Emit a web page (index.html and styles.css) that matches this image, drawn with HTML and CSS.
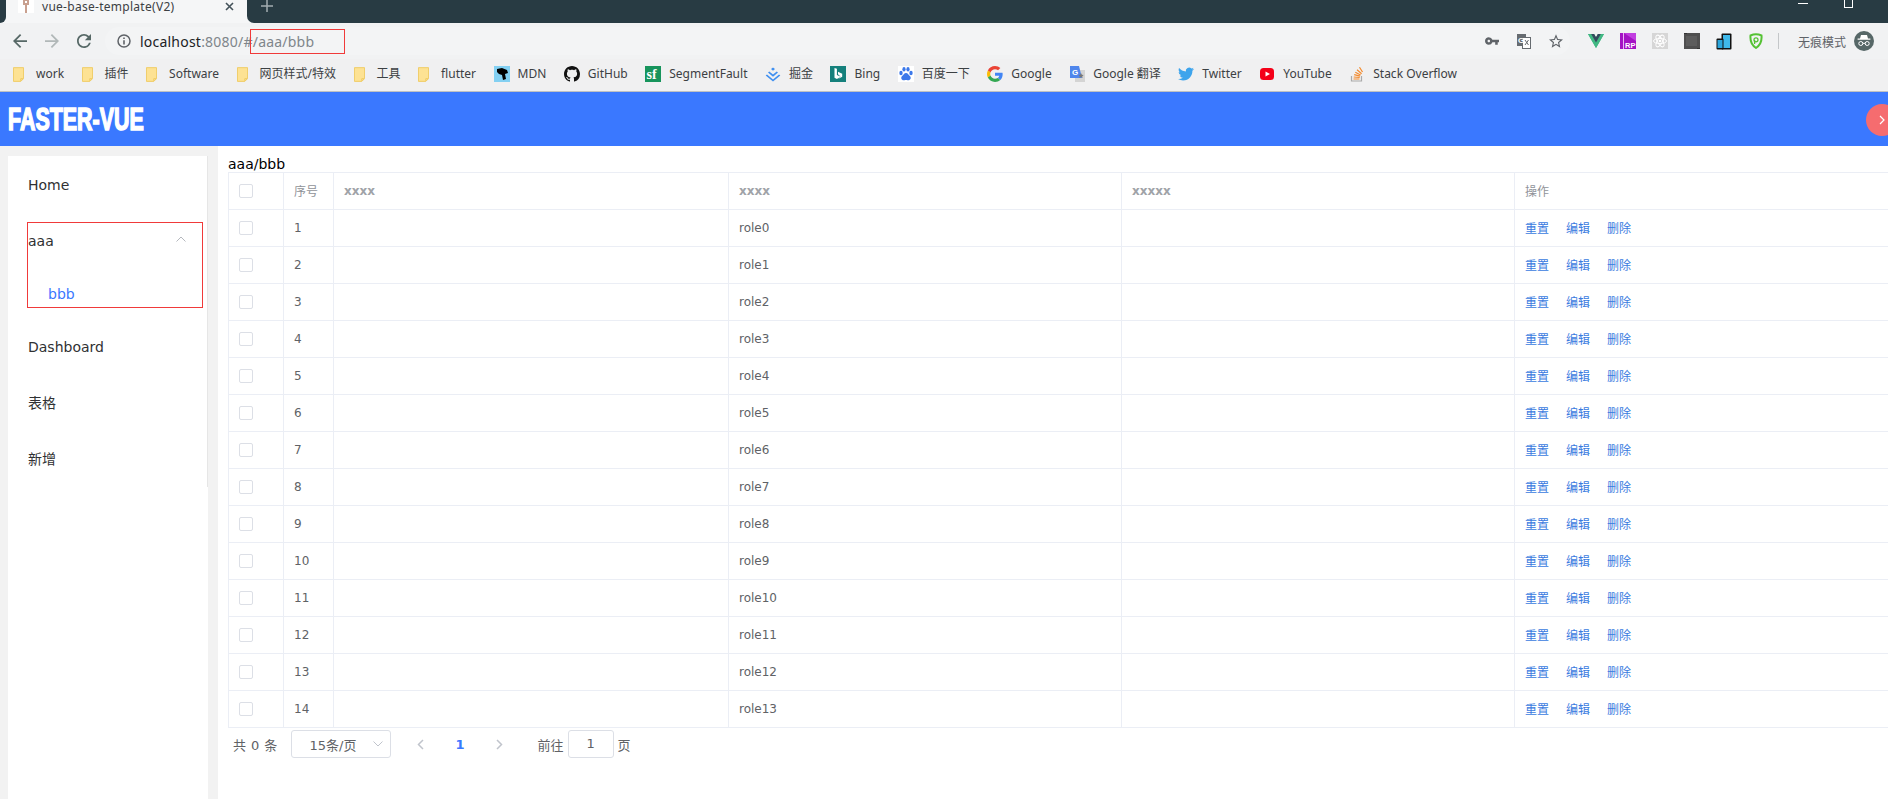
FILE: index.html
```html
<!DOCTYPE html>
<html>
<head>
    <title>vue-base-template(V2)</title>
    <link rel="stylesheet" href="styles.css">
</head>
<body>
    <svg class="defs" width="0" height="0">
        <symbol id="folder" viewBox="0 0 12 16">
            <path d="M.5.5h11v12l-3 3H.5z" fill="#fde293" stroke="#efc95f"/>
            <path d="M8.5 15v-2.5H11" fill="none" stroke="#efc95f"/>
        </symbol>
    </svg>

    <div class="tabstrip">
        <div class="strip-left"></div>
        <div class="tab">
            <div class="favicon">
                <svg width="8" height="13" viewBox="0 0 8 13"><path d="M1 0h6v5H5v8H3V5H1z" fill="#c9a08f"/><path d="M3 1h2v2H3z" fill="#fff"/></svg>
            </div>
            <span class="tab-title">vue-base-template(V2)</span>
            <svg class="tab-close" width="9" height="9" viewBox="0 0 9 9"><path d="M1 1l7 7M8 1L1 8" stroke="#44525a" stroke-width="1.6"/></svg>
        </div>
        <div class="strip-right">
            <svg class="new-tab" width="12" height="12" viewBox="0 0 12 12"><path d="M6 0v12M0 6h12" stroke="#a3adb1" stroke-width="1.5"/></svg>
            <div class="win-min"></div>
            <div class="win-restore"></div>
        </div>
    </div>

    <div class="toolbar">
        <svg class="nav-icon" viewBox="4 4 16 16"><path d="M20 11H7.83l5.59-5.59L12 4l-8 8 8 8 1.41-1.41L7.83 13H20v-2z" fill="#566866"/></svg>
        <svg class="nav-icon" viewBox="4 4 16 16"><path d="M4 11h12.17l-5.59-5.59L12 4l8 8-8 8-1.41-1.41L16.17 13H4v-2z" fill="#b1b8b8"/></svg>
        <svg class="nav-icon" viewBox="4 4 16 16"><path d="M17.65 6.35A7.958 7.958 0 0 0 12 4c-4.42 0-7.99 3.58-7.99 8s3.57 8 7.99 8c3.73 0 6.84-2.55 7.73-6h-2.08A5.99 5.99 0 0 1 12 18c-3.31 0-6-2.69-6-6s2.69-6 6-6c1.66 0 3.14.69 4.22 1.78L13 11h7V4l-2.35 2.35z" fill="#566866"/></svg>
        <div class="omnibox">
            <svg class="info-icon" width="14" height="14" viewBox="0 0 14 14"><circle cx="7" cy="7" r="6" fill="none" stroke="#5f6368" stroke-width="1.5"/><path d="M6.2 3.4h1.6V5H6.2zM6.2 6.2h1.6v4.4H6.2z" fill="#5f6368"/></svg>
            <span class="url"><span class="url-host">localhost</span>:8080/#/aaa/bbb</span>
            <div class="url-mark"></div>
            <div class="omni-actions">
                <svg width="14" height="8" viewBox="1 6 22 12"><path d="M12.65 10A5.99 5.99 0 0 0 7 6c-3.31 0-6 2.69-6 6s2.69 6 6 6a5.99 5.99 0 0 0 5.65-4H17v4h4v-4h2v-4H12.65zM7 14c-1.1 0-2-.9-2-2s.9-2 2-2 2 .9 2 2-.9 2-2 2z" fill="#5f6368"/></svg>
                <svg width="14" height="15" viewBox="0 0 14 15"><rect x="0" y="0" width="9" height="12" fill="#666b70"/><rect x="5.5" y="3.5" width="8" height="11" fill="#fff" stroke="#666b70"/><text x="1" y="8.5" class="svg-tiny">G</text><path d="M8 6l3.5 5M11.5 6L8 11" stroke="#666b70"/></svg>
                <svg width="14" height="14" viewBox="2 2 20 19"><path d="M22 9.24l-7.19-.62L12 2 9.19 8.63 2 9.24l5.46 4.73L5.82 21 12 17.27 18.18 21l-1.63-7.03L22 9.24zM12 15.4l-3.76 2.27 1-4.28-3.32-2.88 4.38-.38L12 6.1l1.71 4.04 4.38.38-3.32 2.88 1 4.28L12 15.4z" fill="#5f6368"/></svg>
            </div>
        </div>
        <div class="extensions">
            <svg width="16" height="14" viewBox="0 0 256 221"><path d="M204.8 0H256L128 220.8 0 0h97.92L128 51.2 158.72 0h46.08z" fill="#41b883"/><path d="M0 0l128 220.8L256 0h-51.2L128 132.48 50.56 0H0z" fill="#41b883"/><path d="M50.56 0L128 133.12 204.8 0h-47.36L128 51.2 97.92 0H50.56z" fill="#35495e"/></svg>
            <svg width="16" height="16" viewBox="0 0 16 16"><rect width="16" height="16" fill="#a413c4"/><rect x="3" width="1" height="16" fill="#e9b5f2"/><path d="M4 0h12v8z" fill="#c23fe0"/><text x="5" y="14.5" class="svg-rp">RP</text></svg>
            <svg width="16" height="16" viewBox="0 0 16 16"><rect width="16" height="16" fill="#d6d6d6"/><g fill="none" stroke="#fff"><ellipse cx="8" cy="8" rx="6.5" ry="2.6"/><ellipse cx="8" cy="8" rx="6.5" ry="2.6" transform="rotate(60 8 8)"/><ellipse cx="8" cy="8" rx="6.5" ry="2.6" transform="rotate(120 8 8)"/></g><circle cx="8" cy="8" r="1.3" fill="#fff"/></svg>
            <svg width="16" height="16" viewBox="0 0 16 16"><rect width="16" height="16" fill="#4f4f4f"/><rect x="2" y="3" width="11" height="10" fill="#5c5c5c"/><path d="M0 0h3v1H0zM13 15h3v1h-3z" fill="#333"/></svg>
            <svg width="16" height="17" viewBox="0 0 16 17"><rect x="5.5" y=".5" width="10" height="16" rx="1" fill="#111"/><rect x="7" y="2" width="7" height="13" fill="#3fb9ea"/><rect x=".5" y="5.5" width="7" height="11" rx="1" fill="#111"/><rect x="1.5" y="7" width="5" height="8" fill="#2ba6dc"/></svg>
            <svg width="16" height="16" viewBox="0 0 16 16"><path d="M2.5 2.5C6 1 10 1 13.5 2.5 14 8 12 12.5 8 15 4 12.5 2 8 2.5 2.5z" fill="none" stroke="#55c234" stroke-width="2"/><circle cx="8" cy="6.8" r="2" fill="none" stroke="#55c234" stroke-width="1.3"/><path d="M6.6 7v4" stroke="#55c234" stroke-width="1.3"/></svg>
        </div>
        <div class="tool-divider"></div>
        <span class="incognito-label">无痕模式</span>
        <svg class="incognito" width="20" height="20" viewBox="0 0 20 20"><circle cx="10" cy="10" r="10" fill="#566767"/><path d="M7 4h6l1 3.6h2.4v1.1H3.6V7.6H6z" fill="#fff"/><g fill="none" stroke="#fff"><circle cx="6.8" cy="12.5" r="2"/><circle cx="13.2" cy="12.5" r="2"/><path d="M8.8 12.3h2.4"/></g></svg>
    </div>

    <div class="bookmarks">
        <div class="bm bm-dir"><svg class="bm-folder"><use href="#folder"/></svg><span>work</span></div>
        <div class="bm bm-dir"><svg class="bm-folder"><use href="#folder"/></svg><span>插件</span></div>
        <div class="bm bm-dir"><svg class="bm-folder"><use href="#folder"/></svg><span>Software</span></div>
        <div class="bm bm-dir"><svg class="bm-folder"><use href="#folder"/></svg><span>网页样式/特效</span></div>
        <div class="bm bm-dir"><svg class="bm-folder"><use href="#folder"/></svg><span>工具</span></div>
        <div class="bm bm-dir"><svg class="bm-folder"><use href="#folder"/></svg><span>flutter</span></div>
        <div class="bm">
            <svg class="bm-icon" viewBox="0 0 16 16"><rect width="16" height="16" fill="#83d0f2"/><path d="M3 3l5-1 5 2 1 3-3 1 1 5-3 1-1-5-3-1-2-2z" fill="#000"/></svg>
            <span>MDN</span>
        </div>
        <div class="bm">
            <svg class="bm-icon" viewBox="0 0 16 16"><path d="M8 0C3.58 0 0 3.58 0 8c0 3.54 2.29 6.53 5.47 7.59.4.07.55-.17.55-.38 0-.19-.01-.82-.01-1.49-2.01.37-2.53-.49-2.69-.94-.09-.23-.48-.94-.82-1.13-.28-.15-.68-.52-.01-.53.63-.01 1.08.58 1.23.82.72 1.21 1.87.87 2.33.66.07-.52.28-.87.51-1.07-1.78-.2-3.64-.89-3.64-3.95 0-.87.31-1.59.82-2.15-.08-.2-.36-1.02.08-2.12 0 0 .67-.21 2.2.82.64-.18 1.32-.27 2-.27.68 0 1.36.09 2 .27 1.53-1.04 2.2-.82 2.2-.82.44 1.1.16 1.92.08 2.12.51.56.82 1.27.82 2.15 0 3.07-1.87 3.75-3.65 3.95.29.25.54.73.54 1.48 0 1.07-.01 1.93-.01 2.2 0 .21.15.46.55.38A8.013 8.013 0 0 0 16 8c0-4.42-3.58-8-8-8z" fill="#111"/></svg>
            <span>GitHub</span>
        </div>
        <div class="bm">
            <svg class="bm-icon" viewBox="0 0 16 16"><rect width="16" height="16" fill="#17945c"/><text x="1.5" y="13" class="svg-sf">sf</text></svg>
            <span>SegmentFault</span>
        </div>
        <div class="bm">
            <svg class="bm-icon" viewBox="0 0 16 16"><path d="M8 1.5l2 1.6-2 1.6-2-1.6zM4.3 5.5L8 8.5l3.7-3L13 6.6l-5 4.1-5-4.1zM2 8.6l6 4.9 6-4.9 1.3 1L8 15.5.7 9.600z" fill="#3f8ff0"/></svg>
            <span>掘金</span>
        </div>
        <div class="bm">
            <svg class="bm-icon" viewBox="0 0 16 16"><rect width="16" height="16" fill="#15807c"/><path d="M4.5 2l2.4.8v6.100l3.900 1.900-3.500 2-.4.2-2.400-1.300zM8 5.800l4.200 1.900v3l-4 2.300 2.600-2.300L8 8.200z" fill="#fff"/></svg>
            <span>Bing</span>
        </div>
        <div class="bm">
            <svg class="bm-icon" viewBox="0 0 16 16"><rect width="16" height="16" fill="#fff"/><g fill="#3b78ea"><ellipse cx="3" cy="7" rx="1.7" ry="2.2"/><ellipse cx="6" cy="3.2" rx="1.6" ry="2.2"/><ellipse cx="10" cy="3.2" rx="1.6" ry="2.2"/><ellipse cx="13" cy="7" rx="1.7" ry="2.2"/><path d="M8 7c2 0 2.5 2 3.8 3 1.800 1.500.8 4.500-1.800 4.300-1-.1-1.400-.3-2-.3s-1 .2-2 .3c-2.600.2-3.600-2.800-1.800-4.300C5.500 9 6 7 8 7z"/></g></svg>
            <span>百度一下</span>
        </div>
        <div class="bm">
            <svg class="bm-icon" viewBox="0 0 48 48"><path fill="#ea4335" d="M24 9.5c3.54 0 6.71 1.22 9.21 3.6l6.85-6.85C35.9 2.38 30.47 0 24 0 14.62 0 6.51 5.38 2.56 13.22l7.98 6.19C12.43 13.72 17.74 9.5 24 9.5z"/><path fill="#4285f4" d="M46.98 24.55c0-1.57-.15-3.09-.38-4.55H24v9.02h12.94c-.58 2.96-2.26 5.48-4.78 7.18l7.73 6c4.51-4.18 7.09-10.36 7.09-17.65z"/><path fill="#fbbc05" d="M10.53 28.59c-.48-1.45-.76-2.99-.76-4.59s.27-3.14.76-4.59l-7.98-6.19C.92 16.46 0 20.12 0 24c0 3.88.92 7.54 2.56 10.78l7.97-6.19z"/><path fill="#34a853" d="M24 48c6.48 0 11.93-2.13 15.89-5.81l-7.73-6c-2.15 1.45-4.92 2.3-8.16 2.3-6.26 0-11.57-4.22-13.47-9.91l-7.98 6.19C6.51 42.62 14.62 48 24 48z"/></svg>
            <span>Google</span>
        </div>
        <div class="bm">
            <svg class="bm-icon" viewBox="0 0 16 16"><rect x="6" y="4" width="10" height="12" fill="#d4d4d4"/><path d="M1 0h9l3 12H1z" fill="#4f86ec"/><text x="3" y="9" class="svg-tiny">G</text><path d="M12 7l.8 1.8 1.8.2-1.300 1.200.3 1.800-1.600-.9-1.600.9.3-1.800L9.400 9l1.800-.2z" fill="#777"/></svg>
            <span>Google 翻译</span>
        </div>
        <div class="bm">
            <svg class="bm-icon" viewBox="0 0 24 24"><path d="M23.953 4.57a10 10 0 0 1-2.825.775 4.958 4.958 0 0 0 2.163-2.723c-.951.555-2.005.959-3.127 1.184a4.92 4.92 0 0 0-8.384 4.482C7.69 8.095 4.067 6.13 1.64 3.162a4.822 4.822 0 0 0-.666 2.475c0 1.71.87 3.213 2.188 4.096a4.904 4.904 0 0 1-2.228-.616v.06a4.923 4.923 0 0 0 3.946 4.827 4.996 4.996 0 0 1-2.212.085 4.936 4.936 0 0 0 4.604 3.417 9.867 9.867 0 0 1-6.102 2.105c-.39 0-.779-.023-1.17-.067a13.995 13.995 0 0 0 7.557 2.209c9.053 0 13.998-7.496 13.998-13.985 0-.21 0-.42-.015-.63A9.935 9.935 0 0 0 24 4.59z" fill="#3ea4ec"/></svg>
            <span>Twitter</span>
        </div>
        <div class="bm">
            <svg class="bm-icon" viewBox="0 0 16 16"><rect x="1" y="2" width="14" height="12" rx="3.5" fill="#f40018"/><path d="M6.5 5.5L11 8l-4.500 2.500z" fill="#fff"/></svg>
            <span>YouTube</span>
        </div>
        <div class="bm">
            <svg class="bm-icon" viewBox="0 0 16 16"><path d="M2.5 10v5h10v-5" fill="none" stroke="#aaa" stroke-width="1.2"/><path d="M4.5 13h6M4.7 11l6 .5M5.2 8.7l5.800 1.500M6.300 6.200l5.300 2.800M8 3.800l4.600 3.900M10.500 1.200l3 4.800" stroke="#f38a2d" stroke-width="1.2"/></svg>
            <span>Stack Overflow</span>
        </div>
    </div>

    <div class="app-header">
        <span class="logo">FASTER-VUE</span>
        <div class="fold-btn">
            <svg width="6" height="10" viewBox="0 0 6 10"><path d="M1 1l4 4-4 4" fill="none" stroke="#fff" stroke-width="1.2"/></svg>
        </div>
    </div>

    <div class="app-body">
        <div class="sidebar">
            <div class="menu">
                <div class="menu-item">Home</div>
                <div class="menu-item">aaa
                    <svg class="menu-arrow" width="10" height="6" viewBox="0 0 10 6"><path d="M.5 5.5L5 1l4.500 4.500" fill="none" stroke="#b5b8be"/></svg>
                </div>
                <div class="menu-sub">bbb</div>
                <div class="menu-item">Dashboard</div>
                <div class="menu-item">表格</div>
                <div class="menu-item">新增</div>
                <div class="menu-mark"></div>
            </div>
        </div>

        <div class="main">
            <div class="crumb">aaa/bbb</div>
            <table class="grid">
                <colgroup>
                    <col class="col-check">
                    <col class="col-index">
                    <col class="col-a">
                    <col class="col-b">
                    <col class="col-c">
                    <col class="col-ops">
                </colgroup>
                <thead>
                    <tr><th><span class="check"></span></th><th class="th-cjk">序号</th><th class="th-latin">xxxx</th><th class="th-latin">xxxx</th><th class="th-latin">xxxxx</th><th class="th-cjk">操作</th></tr>
                </thead>
                <tbody>
                    <tr><td><span class="check"></span></td><td>1</td><td></td><td>role0</td><td></td><td class="ops"><a>重置</a><a>编辑</a><a>删除</a></td></tr>
                    <tr><td><span class="check"></span></td><td>2</td><td></td><td>role1</td><td></td><td class="ops"><a>重置</a><a>编辑</a><a>删除</a></td></tr>
                    <tr><td><span class="check"></span></td><td>3</td><td></td><td>role2</td><td></td><td class="ops"><a>重置</a><a>编辑</a><a>删除</a></td></tr>
                    <tr><td><span class="check"></span></td><td>4</td><td></td><td>role3</td><td></td><td class="ops"><a>重置</a><a>编辑</a><a>删除</a></td></tr>
                    <tr><td><span class="check"></span></td><td>5</td><td></td><td>role4</td><td></td><td class="ops"><a>重置</a><a>编辑</a><a>删除</a></td></tr>
                    <tr><td><span class="check"></span></td><td>6</td><td></td><td>role5</td><td></td><td class="ops"><a>重置</a><a>编辑</a><a>删除</a></td></tr>
                    <tr><td><span class="check"></span></td><td>7</td><td></td><td>role6</td><td></td><td class="ops"><a>重置</a><a>编辑</a><a>删除</a></td></tr>
                    <tr><td><span class="check"></span></td><td>8</td><td></td><td>role7</td><td></td><td class="ops"><a>重置</a><a>编辑</a><a>删除</a></td></tr>
                    <tr><td><span class="check"></span></td><td>9</td><td></td><td>role8</td><td></td><td class="ops"><a>重置</a><a>编辑</a><a>删除</a></td></tr>
                    <tr><td><span class="check"></span></td><td>10</td><td></td><td>role9</td><td></td><td class="ops"><a>重置</a><a>编辑</a><a>删除</a></td></tr>
                    <tr><td><span class="check"></span></td><td>11</td><td></td><td>role10</td><td></td><td class="ops"><a>重置</a><a>编辑</a><a>删除</a></td></tr>
                    <tr><td><span class="check"></span></td><td>12</td><td></td><td>role11</td><td></td><td class="ops"><a>重置</a><a>编辑</a><a>删除</a></td></tr>
                    <tr><td><span class="check"></span></td><td>13</td><td></td><td>role12</td><td></td><td class="ops"><a>重置</a><a>编辑</a><a>删除</a></td></tr>
                    <tr><td><span class="check"></span></td><td>14</td><td></td><td>role13</td><td></td><td class="ops"><a>重置</a><a>编辑</a><a>删除</a></td></tr>
                </tbody>
            </table>
            <div class="pager">
                <span class="pager-total">共 0 条</span>
                <div class="pager-size">
                    <span>15条/页</span>
                    <svg width="10" height="6" viewBox="0 0 10 6"><path d="M.5.5L5 5 9.500.500" fill="none" stroke="#c0c4cc"/></svg>
                </div>
                <svg class="pager-prev" width="7" height="11" viewBox="0 0 7 11"><path d="M6 1L1.500 5.500 6 10" fill="none" stroke="#c0c4cc" stroke-width="1.5"/></svg>
                <span class="pager-num">1</span>
                <svg class="pager-next" width="7" height="11" viewBox="0 0 7 11"><path d="M1 1l4.500 4.500L1 10" fill="none" stroke="#c0c4cc" stroke-width="1.5"/></svg>
                <span class="pager-jump">前往</span>
                <div class="pager-input">1</div>
                <span>页</span>
            </div>
        </div>
    </div>
</body>
</html>
```

FILE: styles.css
```css
html, body {
    margin: 0;
    height: 799px;
    overflow: hidden;
}

body {
    font-family: "DejaVu Sans", "Noto Sans CJK SC", sans-serif;
    background-color: #fff;
    color: #303133;
}

.defs {
    display: block;
}

/* Browser chrome */
.tabstrip {
    display: flex;
    height: 23px;
    background-color: #f5f6f7;
}

.strip-left {
    width: 6px;
    background-color: #283b43;
    border-bottom-right-radius: 7px;
}

.strip-right {
    flex: 1;
    display: flex;
    background-color: #283b43;
    border-bottom-left-radius: 7px;
}

.tab {
    width: 241px;
    display: flex;
    align-items: flex-start;
    font-family: "Noto Sans", "Noto Sans CJK SC", sans-serif;
    font-size: 12px;
    color: #3c4043;
}

.favicon {
    width: 16px;
    height: 13px;
    margin-left: 12px;
    background-color: #fff;
    display: flex;
    justify-content: center;
}

.tab-title {
    margin-left: 8px;
    line-height: 14px;
    letter-spacing: .28px;
}

.tab-close {
    margin-left: auto;
    margin-right: 13px;
    margin-top: 2px;
}

.new-tab {
    margin-left: 14px;
}

.win-min {
    width: 10px;
    height: 1px;
    margin-left: auto;
    margin-top: 3px;
    background-color: #fff;
}

.win-restore {
    width: 7px;
    height: 7px;
    margin-left: 36px;
    margin-right: 35px;
    border: 1px solid #fff;
    border-top: none;
}

.toolbar {
    height: 36px;
    display: flex;
    align-items: center;
    padding-left: 13px;
    background-color: #f1f2f3;
}

.nav-icon {
    width: 14px;
    height: 14px;
    margin-right: 18px;
}

.omnibox {
    position: relative;
    width: 1465px;
    height: 28px;
    margin-left: -4px;
    display: flex;
    align-items: center;
    padding-left: 12px;
    padding-right: 7px;
    box-sizing: border-box;
    border-radius: 14px;
    background-color: #f3f4f5;
    font-family: "Noto Sans", "Noto Sans CJK SC", sans-serif;
}

.url {
    margin-left: 9px;
    font-size: 14px;
    letter-spacing: .22px;
    color: #80868b;
}

.url-host {
    color: #202124;
}

.url-mark {
    position: absolute;
    left: 145px;
    top: 2px;
    width: 93px;
    height: 23px;
    border: 1px solid #f03a3a;
}

.omni-actions {
    margin-left: auto;
    display: flex;
    align-items: center;
    gap: 18px;
}

.svg-tiny {
    font-family: "Liberation Sans", sans-serif;
    font-size: 8px;
    font-weight: bold;
    fill: #fff;
}

.svg-rp {
    font-family: "Liberation Sans", sans-serif;
    font-size: 7.5px;
    font-weight: bold;
    fill: #fff;
}

.svg-sf {
    font-family: "Liberation Serif", serif;
    font-size: 14px;
    font-weight: bold;
    fill: #fff;
}

.extensions {
    margin-left: 18px;
    display: flex;
    align-items: center;
    gap: 16px;
}

.tool-divider {
    width: 1px;
    height: 16px;
    margin-left: 14px;
    background-color: #c4c7c9;
}

.incognito-label {
    margin-left: 19px;
    font-size: 12px;
    color: #5f6368;
    font-family: "Noto Sans CJK SC", sans-serif;
}

.incognito {
    margin-left: 8px;
}

.bookmarks {
    height: 32px;
    box-sizing: content-box;
    display: flex;
    align-items: center;
    gap: 17.5px;
    padding-left: 13px;
    background-color: #f0f0f1;
    border-bottom: 1px solid #bfc1c3;
    font-family: "Noto Sans", "Noto Sans CJK SC", sans-serif;
    font-size: 12px;
    line-height: 14px;
    color: #3c4043;
}

.bm {
    display: flex;
    align-items: center;
    gap: 8px;
    margin-bottom: 2px;
}

.bm-dir {
    gap: 12px;
}

.bm-folder {
    width: 11px;
    height: 15px;
}

.bm-icon {
    width: 16px;
    height: 16px;
}

/* App header */
.app-header {
    position: relative;
    height: 54px;
    background-color: #3a78ff;
    display: flex;
    align-items: center;
    padding-left: 8px;
}

.logo {
    display: block;
    font-family: "Liberation Sans Narrow", "Liberation Sans", sans-serif;
    font-size: 32px;
    font-weight: bold;
    color: #fff;
    -webkit-text-stroke: 1.6px #fff;
    transform: scaleX(.67);
    transform-origin: left center;
    white-space: nowrap;
}

.fold-btn {
    position: absolute;
    left: 1866px;
    top: 12px;
    width: 32px;
    height: 32px;
    border-radius: 50%;
    background-color: #f56c6f;
    display: flex;
    align-items: center;
    padding-left: 13px;
    box-sizing: border-box;
}

/* Layout */
.app-body {
    display: flex;
    height: 653px;
}

.sidebar {
    width: 218px;
    flex-shrink: 0;
    padding: 10px 10px 0 8px;
    box-sizing: border-box;
    background-color: #f2f2f2;
}

.menu {
    position: relative;
    height: 100%;
    padding-top: 1px;
    box-sizing: border-box;
    background-color: #fff;
    font-size: 14px;
}

.menu::after {
    content: "";
    position: absolute;
    right: 0;
    top: 0;
    width: 1px;
    height: 331px;
    background-color: #e6e6e6;
}

.menu-item {
    height: 56px;
    line-height: 56px;
    padding-left: 20px;
    position: relative;
    color: #303133;
}

.menu-arrow {
    position: absolute;
    right: 22px;
    top: 23px;
}

.menu-sub {
    height: 50px;
    line-height: 50px;
    padding-left: 40px;
    color: #3a78ff;
}

.menu-mark {
    position: absolute;
    left: 19px;
    top: 66px;
    width: 174px;
    height: 84px;
    border: 1px solid #f03a3a;
}

.main {
    flex: 1;
    min-width: 0;
    padding-left: 10px;
}

.crumb {
    height: 26px;
    line-height: 36px;
    font-size: 14px;
    color: #000;
}

/* Table */
.grid {
    table-layout: fixed;
    width: 1660px;
    border-collapse: separate;
    border-spacing: 0;
    border-top: 1px solid #ebeef5;
    border-left: 1px solid #ebeef5;
    font-size: 12px;
    color: #606266;
}

.col-check { width: 55px; }
.col-index { width: 50px; }
.col-a { width: 395px; }
.col-b { width: 393px; }
.col-c { width: 393px; }
.col-ops { width: 374px; }

.grid th,
.grid td {
    height: 36px;
    padding: 0 0 0 10px;
    border-right: 1px solid #ebeef5;
    border-bottom: 1px solid #ebeef5;
    text-align: left;
    font-weight: normal;
    box-sizing: content-box;
}

.grid th {
    color: #909399;
}

.grid .th-latin {
    font-weight: bold;
    color: #a0a3a8;
}

.grid .th-cjk,
.grid .ops {
    height: 34px;
    padding-bottom: 2px;
}

.check {
    display: block;
    width: 12px;
    height: 12px;
    border: 1px solid #dcdfe6;
    border-radius: 2px;
}

.ops a {
    margin-right: 17px;
    color: #3a7be0;
}

/* Pager */
.pager {
    display: flex;
    align-items: center;
    height: 28px;
    margin-top: 2px;
    padding-left: 5px;
    font-size: 13px;
    color: #606266;
}

.pager-total {
    letter-spacing: .4px;
}

.pager-size {
    width: 100px;
    height: 28px;
    margin-left: 13px;
    box-sizing: border-box;
    padding: 0 7px 0 18px;
    display: flex;
    align-items: center;
    justify-content: space-between;
    border: 1px solid #dcdfe6;
    border-radius: 3px;
}

.pager-prev {
    margin-left: 26px;
}

.pager-num {
    margin-left: 32px;
    font-weight: bold;
    color: #3a78ff;
}

.pager-next {
    margin-left: 31px;
}

.pager-jump {
    margin-left: 35px;
}

.pager-input {
    width: 46px;
    height: 28px;
    margin: 0 4px;
    box-sizing: border-box;
    line-height: 26px;
    text-align: center;
    border: 1px solid #dcdfe6;
    border-radius: 3px;
}
```
